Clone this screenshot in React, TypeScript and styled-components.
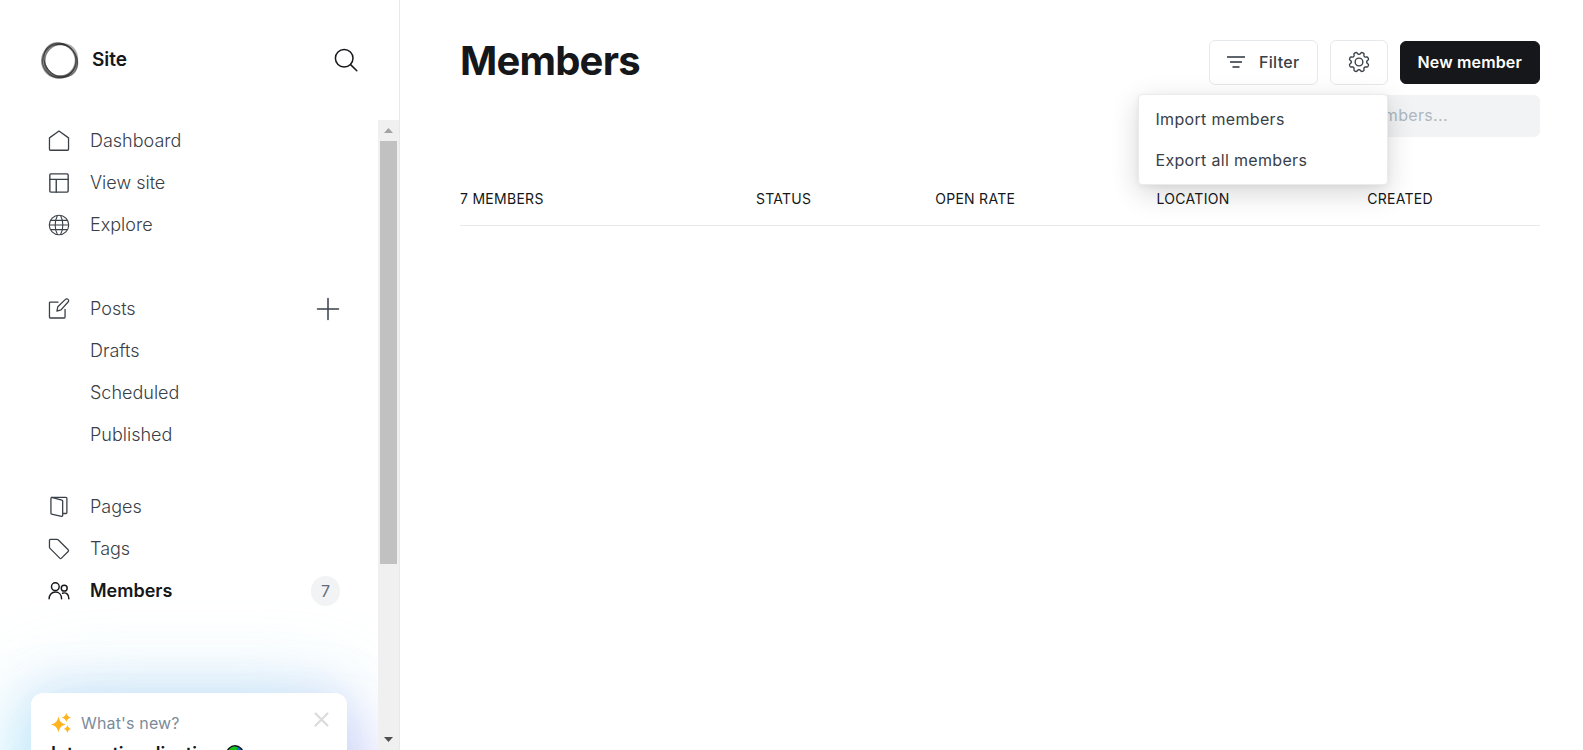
import React from "react";
import styled, { createGlobalStyle, css } from "styled-components";

const GlobalStyle = createGlobalStyle`
  *, *::before, *::after { box-sizing: border-box; }
  body {
    margin: 0;
    background: #fff;
    color: #15171a;
    font-family: Inter, "Liberation Sans", sans-serif;
  }
  button, input { font: inherit; color: inherit; }
  a { color: inherit; text-decoration: none; }
`;

const tracked = css`
  letter-spacing: 0.02em;
`;

const Shell = styled.div`
  display: grid;
  grid-template-columns: 400px 1fr;
  height: 100vh;
  overflow: hidden;
`;

/* ---------- Sidebar ---------- */

const Sidebar = styled.aside`
  display: flex;
  flex-direction: column;
  min-height: 0;
  border-right: 1px solid #e6e9eb;
`;

const SiteHeader = styled.header`
  display: flex;
  align-items: center;
  flex: none;
  height: 120px;
  padding: 0 41px 0 40px;
`;

const SiteName = styled.span`
  flex: 1;
  margin-left: 12px;
  font-size: 19px;
  font-weight: 600;
  line-height: 24px;
`;

const IconButton = styled.button`
  display: flex;
  padding: 0;
  border: 0;
  background: none;
  cursor: pointer;
`;

const ScrollArea = styled.div`
  display: flex;
  flex: 1;
  min-height: 0;
`;

const ScrollContent = styled.div`
  flex: 1;
  min-width: 0;
  overflow: hidden;
`;

const ScrollTrack = styled.div`
  display: flex;
  flex-direction: column;
  flex: none;
  width: 21px;
  background: #f0f0f0;
`;

const ScrollThumb = styled.div`
  height: 72%;
  margin: 0 2px;
  background: #c1c1c1;
`;

const ScrollRail = styled.div`
  flex: 1;
  min-height: 0;
`;

const ScrollArrow = styled.div`
  display: flex;
  align-items: center;
  justify-content: center;
  flex: none;
  height: 21px;
`;

const Nav = styled.nav`
  display: flex;
  flex-direction: column;
`;

const NavList = styled.ul<{ $gap?: number }>`
  margin: 0;
  padding: 0 38px 0 48px;
  padding-bottom: ${(p) => p.$gap ?? 0}px;
  list-style: none;
`;

const NavItem = styled.li`
  display: flex;
  align-items: center;
  height: 42px;
`;

const NavLink = styled.a<{ $active?: boolean; $nested?: boolean }>`
  display: flex;
  align-items: center;
  flex: 1;
  gap: 20px;
  padding-left: ${(p) => (p.$nested ? 42 : 0)}px;
  color: #394047;
  font-size: 18px;
  font-weight: 300;
  line-height: 24px;
  ${(p) =>
    p.$active &&
    css`
      color: #15171a;
      font-weight: 600;
    `}
`;

const CountBadge = styled.span`
  display: flex;
  align-items: center;
  justify-content: center;
  width: 29px;
  height: 30px;
  border-radius: 15px;
  background: #f1f3f4;
  color: #626d79;
  font-size: 16px;
`;

const NewsCard = styled.section`
  margin: 81px 31px 0;
  height: 160px;
  padding: 16px 18px 16px 20px;
  border-radius: 12px;
  background: #fff;
  box-shadow:
    -28px 8px 64px -8px rgba(185, 245, 255, 0.55),
    0 0 90px rgba(150, 215, 240, 0.3),
    28px 36px 60px -8px rgba(205, 160, 255, 0.4),
    0 0 48px rgba(155, 165, 235, 0.34);
`;

const NewsHead = styled.div`
  display: flex;
  align-items: center;
  justify-content: space-between;
  height: 28px;
`;

const NewsLabel = styled.span`
  display: flex;
  align-items: center;
  gap: 10px;
  color: #7c8b9a;
  font-size: 16px;
  line-height: 28px;
  letter-spacing: 0.01em;
`;

const DismissButton = styled(IconButton)`
  padding-bottom: 8px;
`;

const NewsTitle = styled.a`
  display: flex;
  align-items: center;
  gap: 7px;
  padding-top: 5px;
  font-size: 18px;
  font-weight: 600;
  line-height: 24px;
`;

/* ---------- Members screen ---------- */

const Main = styled.main`
  min-width: 0;
  padding: 40px 43px 0 60px;
`;

const Toolbar = styled.header`
  display: flex;
  align-items: flex-start;
  justify-content: space-between;
`;

const Title = styled.h1`
  margin: 0;
  font-size: 40px;
  font-weight: 700;
  line-height: 42px;
  letter-spacing: -0.02em;
`;

const Tools = styled.div`
  display: flex;
  flex-direction: column;
  align-items: flex-end;
  gap: 10px;
`;

const Actions = styled.div`
  display: flex;
  align-items: center;
  gap: 12px;
`;

const Button = styled.button<{ $primary?: boolean }>`
  display: flex;
  align-items: center;
  gap: 14px;
  height: 45px;
  padding: 0 17px 1px;
  border: 1px solid #e6e9eb;
  border-radius: 6px;
  background: #fff;
  color: #394047;
  font-size: 16px;
  font-weight: 500;
  white-space: nowrap;
  cursor: pointer;
  ${tracked}
  ${(p) =>
    p.$primary &&
    css`
      height: 43px;
      border-color: #15171a;
      background: #15171a;
      color: #fff;
      font-weight: 600;
      letter-spacing: 0.01em;
    `}
`;

const MenuAnchor = styled.div`
  position: relative;
`;

const Menu = styled.ul`
  position: absolute;
  top: 54px;
  right: 0;
  z-index: 2;
  width: 250px;
  margin: 0;
  padding: 3px 0 4px;
  list-style: none;
  border: 1px solid #e9ebed;
  border-radius: 4px;
  background: #fff;
  box-shadow: 0 8px 28px rgba(0, 0, 0, 0.16), 0 2px 6px rgba(0, 0, 0, 0.05);
`;

const MenuButton = styled.button`
  display: block;
  width: 100%;
  height: 41px;
  padding: 0 17px;
  border: 0;
  background: none;
  color: #394047;
  font-size: 16px;
  line-height: 24px;
  text-align: left;
  cursor: pointer;
  ${tracked}
`;

const SearchField = styled.input`
  display: block;
  width: 275px;
  height: 42px;
  padding: 0 12px 2px 35px;
  border: 0;
  border-radius: 6px;
  background: #f1f3f4;
  font-size: 16px;
  ${tracked}
  &::placeholder {
    color: #aeb7c1;
    opacity: 1;
  }
`;

const MembersTable = styled.table`
  width: 100%;
  margin-top: 36px;
  border-collapse: collapse;
  table-layout: fixed;
`;

const HeadCell = styled.th<{ $width: number }>`
  width: ${(p) => p.$width}%;
  height: 52px;
  padding: 0;
  border-bottom: 1px solid #e6e9eb;
  font-size: 14px;
  font-weight: 400;
  line-height: 20px;
  text-align: left;
  text-transform: uppercase;
  white-space: nowrap;
  ${tracked}
`;

/* ---------- Icons ---------- */

const Stroke: React.FC<{ size?: number; width?: number; color?: string; children: React.ReactNode }> = ({
  size = 22,
  width = 1.4,
  color = "#394047",
  children,
}) => (
  <svg
    width={size}
    height={size}
    viewBox="0 0 24 24"
    fill="none"
    stroke={color}
    strokeWidth={width}
    strokeLinecap="round"
    strokeLinejoin="round"
    aria-hidden="true"
  >
    {children}
  </svg>
);

const HomeIcon = () => (
  <Stroke>
    <path d="M12 1.2 1.6 8.6v12.500a1 1 0 0 0 1 1h18.800a1 1 0 0 0 1-1V8.600Z" />
  </Stroke>
);
const LayoutIcon = () => (
  <Stroke width={1.5}>
    <rect x="2" y="2" width="20" height="20" rx="1.2" />
    <path d="M2 8h20M9 8v14" />
  </Stroke>
);
const GlobeIcon = () => (
  <Stroke width={1.2}>
    <circle cx="12" cy="12" r="10.6" />
    <path d="M3 7h18M1.600 12h20.800M3 17h18M10.200 1.800C7 7.500 7 16.500 10.200 22.200M13.800 1.800c3.200 5.700 3.200 14.700 0 20.400" />
  </Stroke>
);
const PostIcon = () => (
  <Stroke>
    <path d="M11 4.400H2.600a1 1 0 0 0-1 1v15.400a1 1 0 0 0 1 1h15a1 1 0 0 0 1-1V12.400" />
    <path d="m14.200 13-4.500 1.200 1-4.600 8.300-8.100a2 2 0 0 1 2.900 0 2 2 0 0 1 0 2.900Z" />
  </Stroke>
);
const PagesIcon = () => (
  <Stroke>
    <path d="m3.900 1.500 11.300 3a1 1 0 0 1 .8 1v15.800a1 1 0 0 1-1.300.9L4 19.700a1 1 0 0 1-.8-1V2.500a1 1 0 0 1 1-1h15.400a1 1 0 0 1 1 1v15.600a1 1 0 0 1-1 1H16" />
  </Stroke>
);
const TagIcon = () => (
  <Stroke>
    <path d="M1.600 2.600a1 1 0 0 1 1-1h7.300a2 2 0 0 1 1.400.6L22 12.800a1.300 1.300 0 0 1 0 1.900L14.700 22a1.300 1.300 0 0 1-1.900 0L2.200 11.300a2 2 0 0 1-.6-1.400Z" />
  </Stroke>
);
const MembersIcon = () => (
  <Stroke color="#15171a" width={1.6}>
    <circle cx="8" cy="7.3" r="4.2" />
    <path d="M1.200 20.400c0-4.400 2.800-7.200 6.800-7.200s6.800 2.800 6.800 7.200" />
    <circle cx="17.7" cy="8.9" r="3.2" />
    <path d="M15.900 14.400c3.900-1.300 6.900 1.400 6.900 6" />
  </Stroke>
);
const SearchIcon = () => (
  <Stroke size={24} width={1.5} color="#15171a">
    <circle cx="10.2" cy="10.2" r="8.8" />
    <path d="m16.600 16.600 6.200 6.200" />
  </Stroke>
);
const PlusIcon = () => (
  <Stroke size={24} width={1.5}>
    <path d="M12 1.500v21M1.500 12h21" />
  </Stroke>
);
const FilterIcon = () => (
  <svg width="18" height="13" viewBox="0 0 18 13" fill="none" stroke="#5d646b" strokeWidth="2" aria-hidden="true">
    <path d="M0 1h18M3 6h12M5.500 11h7" />
  </svg>
);

// Eight rounded lobes around the hub, with a notch at twelve o'clock.
const gearOutline =
  Array.from({ length: 144 }, (_, i) => {
    const angle = (i / 144) * Math.PI * 2;
    const radius = 9.7 - 1.3 * Math.tanh(1.8 * Math.cos(8 * angle)) - 0.1 * Math.cos(16 * angle);
    const x = 12 + radius * Math.sin(angle);
    const y = 12 - radius * Math.cos(angle);
    return `${i ? "L" : "M"}${x.toFixed(2)} ${y.toFixed(2)}`;
  }).join("") + "Z";

const GearIcon = () => (
  <Stroke width={1.5}>
    <circle cx="12" cy="12" r="4.2" />
    <path d={gearOutline} />
  </Stroke>
);
const CloseIcon = () => (
  <Stroke size={15} width={3.6} color="#dadcde">
    <path d="m2.500 2.500 19 19M21.500 2.500l-19 19" />
  </Stroke>
);
const SparkleIcon = () => (
  <svg width="20" height="20" viewBox="0 0 20 20" fill="#ffb41f" aria-hidden="true">
    <path d="M7.500 3.500c1.200 5 2.800 6.700 7.300 8-4.500 1.300-6.100 3-7.300 7.700C6.200 14.500 4.500 12.800 0 11.500c4.500-1.300 6.200-3 7.500-8Z" />
    <path d="M15.300 0c.9 2.700 2 3.700 4.700 4.600-2.700.8-3.800 1.800-4.700 4.500-.9-2.700-1.900-3.700-4.600-4.500 2.700-.9 3.700-1.900 4.600-4.600Z" />
    <path d="M16.500 12c.7 2.300 1.400 3.100 3.500 3.900-2.100.7-2.800 1.600-3.500 3.900-.8-2.300-1.500-3.200-3.700-3.900 2.200-.8 2.900-1.600 3.700-3.900Z" />
  </svg>
);
const EarthIcon = () => (
  <svg width="18" height="18" viewBox="0 0 18 18" aria-hidden="true">
    <circle cx="9" cy="9" r="8.2" fill="#0b78d0" stroke="#111" strokeWidth="1.4" />
    <path d="M2.500 5.500C4 3 6.500 1.600 9 1.500l2.500 1.300-1 2.400L8 7l-1 2.500-3-.5Z" fill="#16c60c" />
    <path d="m9 10 4 1.500-2 4-2 .8Z" fill="#16c60c" />
  </svg>
);
const Arrow: React.FC<{ down?: boolean }> = ({ down }) => (
  <svg width="9" height="5" viewBox="0 0 9 5" fill={down ? "#505050" : "#a3a3a3"} aria-hidden="true">
    <path d={down ? "M0 0h9L4.500 5Z" : "M0 5h9L4.500 0Z"} />
  </svg>
);
// Overlapping translucent rings; the bands swell at the top right and lower right.
const SiteLogo = () => (
  <svg width="40" height="40" viewBox="0 0 40 40" aria-hidden="true">
    <g fill="#222" fillRule="evenodd">
      <path
        opacity=".5"
        d="M1 20.800a17.800 17.800 0 1 0 35.600 0a17.800 17.800 0 1 0-35.600 0ZM5.600 20.400a15.400 15.200 0 1 0 30.800 0a15.400 15.200 0 1 0-30.800 0Z"
      />
      <path
        opacity=".38"
        transform="rotate(48 20 20)"
        d="M1.200 19a19.200 15.600 0 1 0 38.400 0a19.200 15.600 0 1 0-38.400 0ZM3.600 20.600a15.800 15.200 0 1 0 31.600 0a15.800 15.200 0 1 0-31.600 0Z"
      />
      <path
        opacity=".38"
        transform="rotate(-58 20 20)"
        d="M1.400 21.500a18.400 16.400 0 1 0 36.800 0a18.400 16.400 0 1 0-36.800 0ZM4.400 20a15.400 15.400 0 1 0 30.800 0a15.400 15.400 0 1 0-30.800 0Z"
      />
    </g>
    <g fill="none" stroke="#1a1a1a" strokeWidth="0.9" opacity=".6">
      <ellipse cx="19.2" cy="21" rx="16.8" ry="16.6" />
      <ellipse cx="20.6" cy="19.6" rx="18.2" ry="15.6" transform="rotate(48 20 20)" />
    </g>
  </svg>
);

/* ---------- Data ---------- */

interface Entry {
  label: string;
  icon?: React.ReactNode;
  active?: boolean;
  extra?: React.ReactNode;
}

const groups: { gap: number; items: Entry[] }[] = [
  {
    gap: 42,
    items: [
      { label: "Dashboard", icon: <HomeIcon /> },
      { label: "View site", icon: <LayoutIcon /> },
      { label: "Explore", icon: <GlobeIcon /> },
    ],
  },
  {
    gap: 30,
    items: [
      {
        label: "Posts",
        icon: <PostIcon />,
        extra: (
          <IconButton type="button" aria-label="New post">
            <PlusIcon />
          </IconButton>
        ),
      },
      { label: "Drafts" },
      { label: "Scheduled" },
      { label: "Published" },
    ],
  },
  {
    gap: 0,
    items: [
      { label: "Pages", icon: <PagesIcon /> },
      { label: "Tags", icon: <TagIcon /> },
      { label: "Members", icon: <MembersIcon />, active: true, extra: <CountBadge>7</CountBadge> },
    ],
  },
];

const columns = [
  { label: "7 members", width: 27.4 },
  { label: "Status", width: 16.6 },
  { label: "Open rate", width: 20.5 },
  { label: "Location", width: 19.5 },
  { label: "Created", width: 16 },
];

export default function App() {
  return (
    <>
      <GlobalStyle />
      <Shell>
        <Sidebar>
          <SiteHeader>
            <SiteLogo />
            <SiteName>Site</SiteName>
            <IconButton type="button" aria-label="Search site">
              <SearchIcon />
            </IconButton>
          </SiteHeader>
          <ScrollArea>
            <ScrollContent>
              <Nav>
                {groups.map((group, i) => (
                  <NavList key={i} $gap={group.gap}>
                    {group.items.map((item) => (
                      <NavItem key={item.label}>
                        <NavLink href="#" $active={item.active} $nested={!item.icon}>
                          {item.icon}
                          {item.label}
                        </NavLink>
                        {item.extra}
                      </NavItem>
                    ))}
                  </NavList>
                ))}
              </Nav>
              <NewsCard>
                <NewsHead>
                  <NewsLabel>
                    <SparkleIcon />
                    What's new?
                  </NewsLabel>
                  <DismissButton type="button" aria-label="Dismiss">
                    <CloseIcon />
                  </DismissButton>
                </NewsHead>
                <NewsTitle href="#">
                  Internationalization
                  <EarthIcon />
                </NewsTitle>
              </NewsCard>
            </ScrollContent>
            <ScrollTrack aria-hidden="true">
              <ScrollArrow>
                <Arrow />
              </ScrollArrow>
              <ScrollRail>
                <ScrollThumb />
              </ScrollRail>
              <ScrollArrow>
                <Arrow down />
              </ScrollArrow>
            </ScrollTrack>
          </ScrollArea>
        </Sidebar>

        <Main>
          <Toolbar>
            <Title>Members</Title>
            <Tools>
              <Actions>
                <Button type="button">
                  <FilterIcon />
                  Filter
                </Button>
                <MenuAnchor>
                  <Button type="button" aria-label="Member actions" aria-expanded="true">
                    <GearIcon />
                  </Button>
                  <Menu>
                    <li>
                      <MenuButton type="button">Import members</MenuButton>
                    </li>
                    <li>
                      <MenuButton type="button">Export all members</MenuButton>
                    </li>
                  </Menu>
                </MenuAnchor>
                <Button type="button" $primary>
                  New member
                </Button>
              </Actions>
              <SearchField type="text" aria-label="Search members" placeholder="Search members..." />
            </Tools>
          </Toolbar>
          <MembersTable>
            <thead>
              <tr>
                {columns.map((column) => (
                  <HeadCell key={column.label} scope="col" $width={column.width}>
                    {column.label}
                  </HeadCell>
                ))}
              </tr>
            </thead>
          </MembersTable>
        </Main>
      </Shell>
    </>
  );
}
